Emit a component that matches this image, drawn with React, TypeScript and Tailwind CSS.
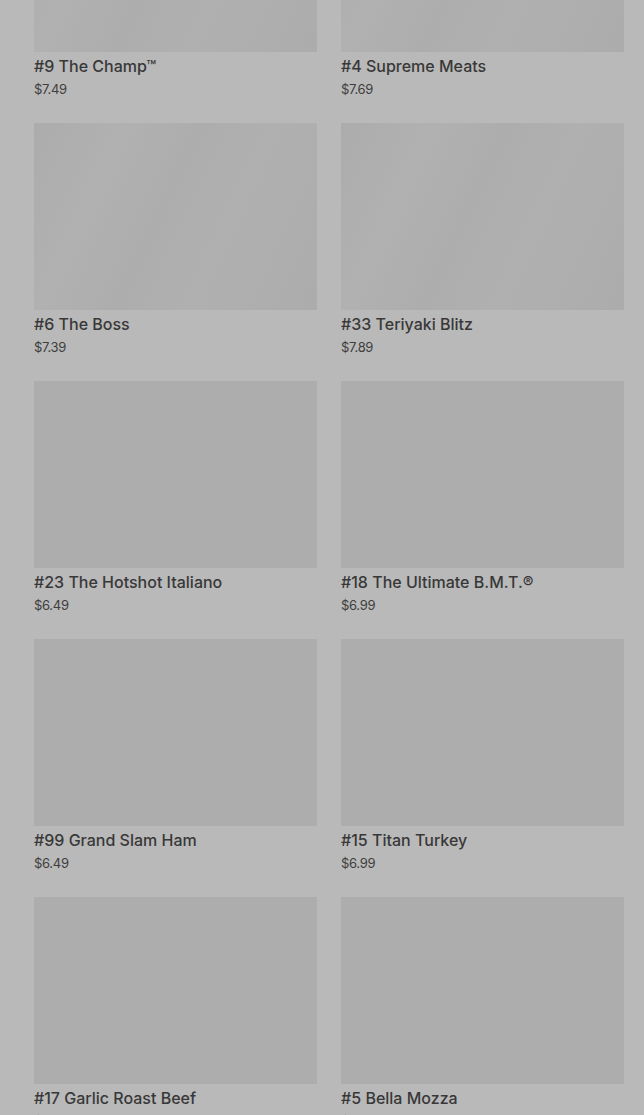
import React from 'react';

interface MenuItem {
  name: string;
  price: string;
  loading?: boolean;
}

const items: MenuItem[] = [
  { name: '#9 The Champ™', price: '$7.49', loading: true },
  { name: '#4 Supreme Meats', price: '$7.69', loading: true },
  { name: '#6 The Boss', price: '$7.39', loading: true },
  { name: '#33 Teriyaki Blitz', price: '$7.89', loading: true },
  { name: '#23 The Hotshot Italiano', price: '$6.49' },
  { name: '#18 The Ultimate B.M.T.®', price: '$6.99' },
  { name: '#99 Grand Slam Ham', price: '$6.49' },
  { name: '#15 Titan Turkey', price: '$6.99' },
  { name: '#17 Garlic Roast Beef', price: '$6.99' },
  { name: '#5 Bella Mozza', price: '$6.99' },
];

function ItemCard({ item }: { item: MenuItem }) {
  return (
    <div className="flex flex-col">
      <div
        className={
          item.loading
            ? 'h-[187px] bg-[linear-gradient(115deg,#acacac_0%,#b1b1b1_25%,#adadad_45%,#b0b0b0_65%,#acacac_100%)]'
            : 'h-[187px] bg-[#adadad]'
        }
      />
      <div className="mt-[3px] text-[16px] leading-[22px] font-medium text-[#383838]">{item.name}</div>
      <div className="mt-[3px] text-[13px] leading-[18px] tracking-[-0.3px] text-[#3e3e3e]">{item.price}</div>
    </div>
  );
}

export default function App() {
  return (
    <div
      className="h-[1115px] overflow-hidden bg-[#b9b9b9]"
      style={{ fontFamily: 'Inter, "Noto Sans", sans-serif' }}
    >
      <div className="mt-[-135px] grid grid-cols-2 gap-x-6 gap-y-[25px] pl-[34px] pr-[20px]">
        {items.map((item) => (
          <ItemCard key={item.name} item={item} />
        ))}
      </div>
    </div>
  );
}
